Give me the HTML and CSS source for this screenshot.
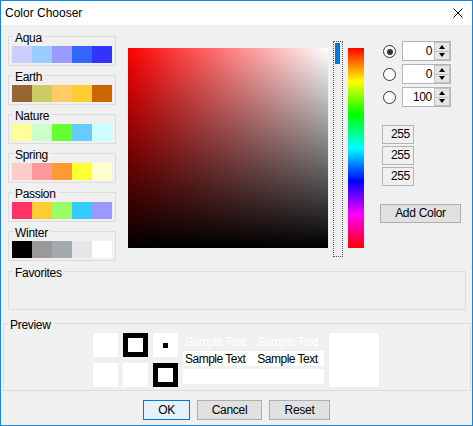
FILE: index.html
```html
<!DOCTYPE html>
<html>
<head>
<meta charset="utf-8">
<title>Color Chooser</title>
<link rel="stylesheet" href="styles.css">
</head>
<body>
<div class="window">
  <div class="titlebar">
    <span class="title">Color Chooser</span>
    <svg class="close" width="10" height="10" viewBox="0 0 10 10"><path d="M0.5 0.5 L9.5 9.5 M9.5 0.5 L0.5 9.5" stroke="#000" stroke-width="1" fill="none"/></svg>
  </div>
  <div class="content">
    <div class="top">
      <div class="palettes">
        <fieldset class="group"><legend>Aqua</legend>
          <div class="swatches"><span class="sw" style="background:#ccccff"></span><span class="sw" style="background:#99ccff"></span><span class="sw" style="background:#9999ff"></span><span class="sw" style="background:#3366ff"></span><span class="sw" style="background:#3333ff"></span></div>
        </fieldset>
        <fieldset class="group"><legend>Earth</legend>
          <div class="swatches"><span class="sw" style="background:#996633"></span><span class="sw" style="background:#cccc66"></span><span class="sw" style="background:#ffcc66"></span><span class="sw" style="background:#ffcc33"></span><span class="sw" style="background:#cc6600"></span></div>
        </fieldset>
        <fieldset class="group"><legend>Nature</legend>
          <div class="swatches"><span class="sw" style="background:#ffff99"></span><span class="sw" style="background:#ccffcc"></span><span class="sw" style="background:#66ff33"></span><span class="sw" style="background:#66ccff"></span><span class="sw" style="background:#ccffff"></span></div>
        </fieldset>
        <fieldset class="group"><legend>Spring</legend>
          <div class="swatches"><span class="sw" style="background:#ffcccc"></span><span class="sw" style="background:#ff9999"></span><span class="sw" style="background:#ff9933"></span><span class="sw" style="background:#ffff33"></span><span class="sw" style="background:#ffffcc"></span></div>
        </fieldset>
        <fieldset class="group"><legend>Passion</legend>
          <div class="swatches"><span class="sw" style="background:#ff3366"></span><span class="sw" style="background:#ffcc33"></span><span class="sw" style="background:#99ff66"></span><span class="sw" style="background:#33ccff"></span><span class="sw" style="background:#9999ff"></span></div>
        </fieldset>
        <fieldset class="group"><legend>Winter</legend>
          <div class="swatches"><span class="sw" style="background:#000000"></span><span class="sw" style="background:#999999"></span><span class="sw" style="background:#a3aaad"></span><span class="sw" style="background:#e6e6e6"></span><span class="sw" style="background:#ffffff"></span></div>
        </fieldset>
      </div>
      <div class="sb-square"></div>
      <div class="slider"><div class="thumb"></div></div>
      <div class="hue"></div>
      <div class="controls">
        <div class="spin-rows">
          <div class="spin-row">
            <span class="radio checked"></span>
            <div class="spinner"><span class="value">0</span><span class="arrows"><span class="arrow up"></span><span class="arrow down"></span></span></div>
          </div>
          <div class="spin-row">
            <span class="radio"></span>
            <div class="spinner"><span class="value">0</span><span class="arrows"><span class="arrow up"></span><span class="arrow down"></span></span></div>
          </div>
          <div class="spin-row">
            <span class="radio"></span>
            <div class="spinner"><span class="value">100</span><span class="arrows"><span class="arrow up"></span><span class="arrow down"></span></span></div>
          </div>
        </div>
        <div class="rgb">
          <div class="rgb-box">255</div>
          <div class="rgb-box">255</div>
          <div class="rgb-box">255</div>
        </div>
        <button class="btn add">Add Color</button>
      </div>
    </div>
    <fieldset class="favorites"><legend>Favorites</legend></fieldset>
    <fieldset class="preview"><legend>Preview</legend>
      <div class="preview-row">
        <div class="swatch-grid">
          <span class="pbox"></span>
          <span class="pbox framed"></span>
          <span class="pbox dot"><span class="dot-inner"></span></span>
          <span class="pbox"></span>
          <span class="pbox"></span>
          <span class="pbox framed"></span>
        </div>
        <div class="sample-col">
          <div class="sample plain"><span>Sample Text</span><span>Sample Text</span></div>
          <div class="sample filled"><span>Sample Text</span><span>Sample Text</span></div>
          <div class="sample filled last"></div>
        </div>
        <div class="big-box"></div>
      </div>
    </fieldset>
    <div class="buttons">
      <button class="btn ok">OK</button>
      <button class="btn cancel">Cancel</button>
      <button class="btn reset">Reset</button>
    </div>
  </div>
</div>
</body>
</html>
```
FILE: styles.css
```css
* { box-sizing: border-box; }
html, body { margin: 0; padding: 0; }
body {
  width: 473px;
  height: 426px;
  overflow: hidden;
  font-family: "Liberation Sans", Arial, sans-serif;
  font-size: 12px;
  letter-spacing: -0.3px;
  color: #000;
  background: #fff;
}
.window {
  width: 473px;
  height: 426px;
  border: 1px solid #1c84d8;
  background: #f0f0f0;
  display: flex;
  flex-direction: column;
  overflow: hidden;
}
.titlebar {
  flex: none;
  height: 24px;
  background: #fff;
  display: flex;
  align-items: center;
  justify-content: space-between;
  padding: 0 9px 0 4px;
}
.title { font-size: 12px; line-height: 16px; letter-spacing: 0; }
.close { display: block; }

.content { flex: 1; display: flex; flex-direction: column; }

.top {
  display: flex;
  align-items: flex-start;
  padding-left: 7px;
  height: 236px;
  flex: none;
}
.palettes {
  margin-top: 2px;
  width: 108px;
  display: flex;
  flex-direction: column;
  gap: 0;
}
fieldset { margin: 0; min-width: 0; border: 1px solid #dcdcdc; }
legend { padding: 4px 2px 0 2px; line-height: 14px; font-size: 12px; }
.group { padding: 1px 3px 2px 3px; }
.group legend { margin-left: 1px; }
.swatches { display: flex; height: 17px; }
.sw { width: 20px; height: 17px; display: block; }

.sb-square {
  margin-left: 12px;
  margin-top: 23px;
  width: 200px;
  height: 200px;
  background: linear-gradient(to top, #000, rgba(0,0,0,0)), linear-gradient(to right, #ff0000, #ffffff);
}
.slider {
  margin-left: 5px;
  margin-top: 16px;
  width: 10px;
  height: 216px;
  border: 1px dotted #5a5a5a;
  padding: 1px;
}
.thumb { width: 5px; height: 21px; background: #0078d7; }
.hue {
  margin-left: 5px;
  margin-top: 23px;
  width: 16px;
  height: 200px;
  background: linear-gradient(to bottom, #ff0000 0%, #ffff00 16.67%, #00ff00 33.33%, #00ffff 50%, #0000ff 66.67%, #ff00ff 83.33%, #ff0000 100%);
}

.controls {
  margin-left: 16px;
  margin-top: 16px;
  display: flex;
  flex-direction: column;
  align-items: flex-start;
}
.spin-rows { display: flex; flex-direction: column; gap: 3px; padding-left: 3px; }
.spin-row { display: flex; align-items: center; gap: 6px; }
.radio {
  width: 13px;
  height: 13px;
  border: 1px solid #333;
  border-radius: 50%;
  background: #fff;
  display: flex;
  align-items: center;
  justify-content: center;
  margin-top: 1px;
}
.radio.checked::after {
  content: "";
  width: 6px;
  height: 6px;
  border-radius: 50%;
  background: #333;
}
.spinner {
  width: 49px;
  height: 20px;
  border: 1px solid #b4b4b4;
  background: #fff;
  display: flex;
}
.value { flex: 1; text-align: right; padding-right: 2px; line-height: 18px; }
.arrows { width: 16px; display: flex; flex-direction: column; }
.arrow {
  flex: 1;
  background: #e6e6e6;
  border: 1px solid #c2c2c2;
  display: flex;
  align-items: center;
  justify-content: center;
}
.arrow.up { border-bottom-width: 0; }
.arrow.up::after {
  content: "";
  border-left: 3.5px solid transparent;
  border-right: 3.5px solid transparent;
  border-bottom: 4px solid #000;
}
.arrow.down::after {
  content: "";
  border-left: 3.5px solid transparent;
  border-right: 3.5px solid transparent;
  border-top: 4px solid #000;
}

.rgb { margin-top: 18px; margin-left: 2px; display: flex; flex-direction: column; gap: 2px; }
.rgb-box {
  width: 32px;
  height: 19px;
  border: 1px solid #b4b4b4;
  text-align: right;
  padding-right: 3px;
  line-height: 17px;
}

.btn {
  font-family: "Liberation Sans", Arial, sans-serif;
  font-size: 12px;
  letter-spacing: -0.3px;
  color: #000;
  height: 20px;
  padding: 0;
  background: #e1e1e1;
  border: 1px solid #adadad;
  line-height: 18px;
}
.add { margin-top: 18px; width: 81px; height: 19px; line-height: 17px; }

.favorites {
  margin: 1px 0 0 7px;
  width: 458px;
  height: 48px;
  padding: 0;
  flex: none;
}
.favorites legend { margin-left: 4px; }
.preview {
  margin: 4px 0 0 2px;
  width: 468px;
  height: 77px;
  padding: 1px 0 0 0;
  flex: none;
}
.preview legend { margin-left: 4px; }
.preview-row { display: flex; margin-left: 89px; }
.swatch-grid {
  display: grid;
  grid-template-columns: repeat(3, 25px);
  grid-auto-rows: 24px;
  column-gap: 5px;
  row-gap: 6px;
}
.pbox { background: #fff; display: flex; align-items: center; justify-content: center; }
.pbox.framed { border: 5px solid #000; }
.dot-inner { width: 5px; height: 5px; background: #000; }
.sample-col { margin-left: 5px; width: 141px; display: flex; flex-direction: column; }
.sample {
  height: 15px;
  line-height: 14px;
  padding: 1px 0 0 2px;
  display: flex;
  gap: 12px;
  white-space: nowrap;
  letter-spacing: -0.5px;
}
.sample.plain { color: #fff; height: 18px; line-height: 18px; padding-top: 0; }
.sample.filled { background: #fff; color: #000; }
.sample.last { margin-top: 3px; }
.big-box { margin-left: 5px; width: 50px; height: 54px; background: #fff; }

.buttons {
  margin-top: 9px;
  display: flex;
  justify-content: center;
  gap: 7px;
}
.ok { width: 47px; background: #e5f1fb; border-color: #0078d7; }
.cancel { width: 65px; }
.reset { width: 61px; }
```
